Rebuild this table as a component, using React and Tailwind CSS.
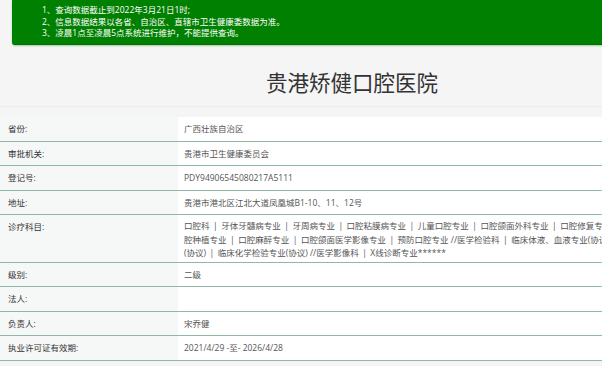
import React from 'react';

const rows = [
  { label: '省份:', value: '广西壮族自治区' },
  { label: '审批机关:', value: '贵港市卫生健康委员会' },
  { label: '登记号:', value: 'PDY94906545080217A5111' },
  { label: '地址:', value: '贵港市港北区江北大道凤凰城B1-10、11、12号' },
  {
    label: '诊疗科目:',
    lines: [
      '口腔科 | 牙体牙髓病专业 | 牙周病专业 | 口腔粘膜病专业 | 儿童口腔专业 | 口腔颌面外科专业 | 口腔修复专业 | 口',
      '腔种植专业 | 口腔麻醉专业 | 口腔颌面医学影像专业 | 预防口腔专业 //医学检验科 | 临床体液、血液专业(协议) | 临床微生物学专业',
      '(协议) | 临床化学检验专业(协议) //医学影像科 | X线诊断专业******',
    ],
  },
  { label: '级别:', value: '二级' },
  { label: '法人:', value: '' },
  { label: '负责人:', value: '宋乔健' },
  { label: '执业许可证有效期:', value: '2021/4/29 -至- 2026/4/28' },
];

// 分隔符 " | " 比默认空格宽一点
function Line({ text }) {
  const parts = text.split(' | ');
  return (
    <div className="whitespace-nowrap">
      {parts.map((p, i) => (
        <React.Fragment key={i}>
          {i > 0 && <span className="mx-[3.5px]">|</span>}
          {p}
        </React.Fragment>
      ))}
    </div>
  );
}

function Row({ row }) {
  return (
    <div className="flex border-b border-[#8fb8a7]">
      <div className="w-[178px] shrink-0 bg-[#f6f7f7] pl-[8px] pt-[5px] text-[#333] leading-[13.5px]">
        {row.label}
      </div>
      {row.lines ? (
        <div className="flex-1 bg-white pl-[6px] pt-[4px] pb-[2.4px] text-[#555] leading-[13.5px] overflow-hidden">
          {row.lines.map((l, i) => (
            <Line key={i} text={l} />
          ))}
        </div>
      ) : (
        <div className="flex-1 h-[23.5px] bg-white pl-[6px] pt-[5px] text-[#555] leading-[13.5px] whitespace-nowrap">
          {row.value}
        </div>
      )}
    </div>
  );
}

export default function App() {
  return (
    <div className="w-[602px] h-[366px] overflow-hidden bg-[#f5f5f5]">
      <div
        className="w-[704px] text-[8.5px]"
        style={{ fontFamily: '"Open Sans", "Noto Sans CJK SC", sans-serif' }}
      >
        {/* 提示 */}
        <div className="mx-[12px] h-[45px] bg-[#008000] rounded-b-[3px] border-b border-[#066d06] shadow-[0_1px_2px_rgba(0,128,0,0.35)] pl-[30px] pt-[4px] text-white leading-[11.7px]">
          <div>1、查询数据截止到2022年3月21日1时;</div>
          <div>2、信息数据结果以各省、自治区、直辖市卫生健康委数据为准。</div>
          <div>3、凌晨1点至凌晨5点系统进行维护，不能提供查询。</div>
        </div>

        <div className="h-[62px] border-b border-[#ececec] pt-[26px] text-center text-[21.5px] leading-[24px] text-[#333]">
          贵港矫健口腔医院
        </div>

        <div className="mt-[10px]">
          {rows.map((r) => (
            <Row key={r.label} row={r} />
          ))}
        </div>
      </div>
    </div>
  );
}
